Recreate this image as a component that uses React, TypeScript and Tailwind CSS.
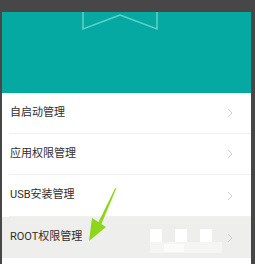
import React from "react";

const rows = [
  { label: "自启动管理", h: "h-[41px]", active: false },
  { label: "应用权限管理", h: "h-[41px]", active: false },
  { label: "USB安装管理", h: "h-[42px]", active: false },
  { label: "ROOT权限管理", h: "h-[41px]", active: true },
];

function Chevron() {
  return (
    <svg width="6" height="10" viewBox="0 0 6 10" className="mr-[18px]">
      <path d="M1 1 L5 5 L1 9" fill="none" stroke="#cfcfcf" strokeWidth="1" />
    </svg>
  );
}

// pixelated blur covering part of the ROOT row
function Mosaic() {
  return (
    <div className="absolute left-[150px] top-[229px] flex flex-col">
      <div className="flex gap-[13px]">
        <div className="w-[12px] h-[13px] bg-white" />
        <div className="w-[12px] h-[13px] bg-white" />
        <div className="w-[12px] h-[13px] bg-white" />
      </div>
      <div className="flex w-[72px] h-[11px] bg-[#f5f5f4]">
        <div className="ml-[14px] mt-[2px] w-[20px] h-[8px] bg-[#fbfbfa]" />
      </div>
    </div>
  );
}

export default function App() {
  return (
    <div
      className="relative w-[255px] h-[264px] overflow-hidden bg-[#474747] pt-[12px] pl-[2px] pr-[4px]"
      style={{ fontFamily: '"Roboto", "Noto Sans CJK SC", sans-serif' }}
    >
      <div className="flex flex-col h-full bg-white">
        <div className="h-[81px] bg-[#05a9a1]">
          <svg width="249" height="81">
            <path
              d="M81 0 L81 17 L118 3 L155 17 L155 0"
              fill="none"
              stroke="#5ed3cb"
              strokeWidth="1.5"
            />
          </svg>
        </div>
        {rows.map((r) => (
          <div key={r.label} className={`${r.h} ${r.active ? "bg-[#eeeeec]" : "bg-white"}`}>
            <div
              className={`flex h-full items-center justify-between ml-[7px] ${
                r.active ? "" : "border-b border-[#f1f1f1]"
              }`}
            >
              <span className="pl-[1px] text-[11px] text-[#2e2e2e]">{r.label}</span>
              <Chevron />
            </div>
          </div>
        ))}
      </div>

      <Mosaic />

      {/* green arrow */}
      <svg width="255" height="264" className="absolute left-0 top-0 pointer-events-none">
        <path d="M116.5 188 L115 188.5 L97.5 224 L101 225 Z" fill="#8ed61a" />
        <path d="M89 241 L92 218 L106 227 Z" fill="#8ed61a" />
      </svg>
    </div>
  );
}
